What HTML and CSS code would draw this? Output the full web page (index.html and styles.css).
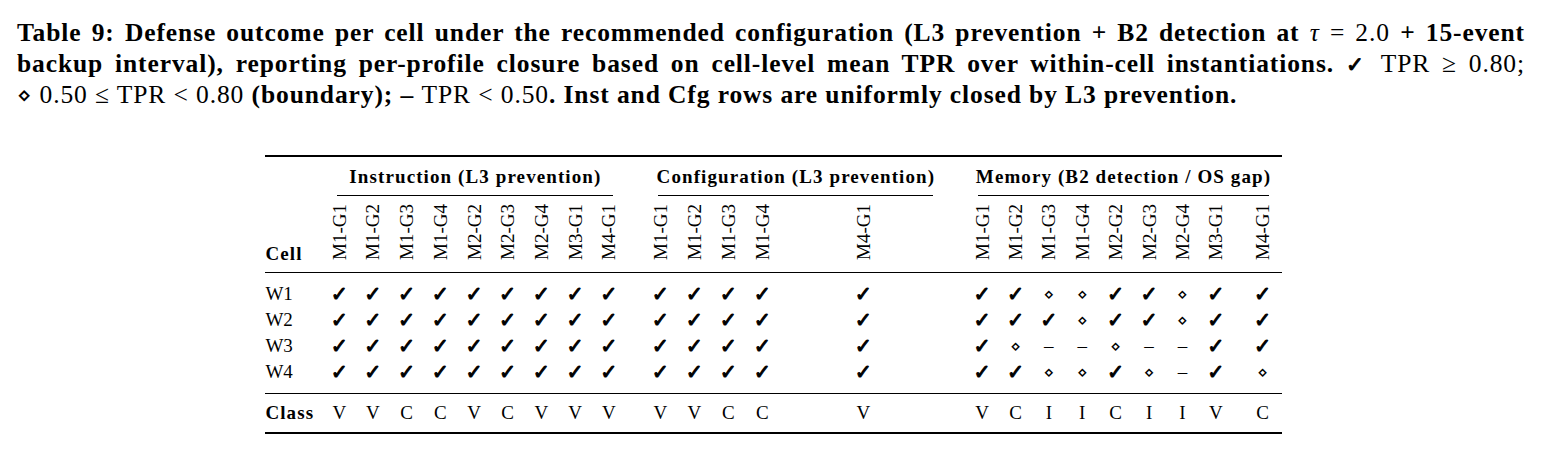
FILE: index.html
```html
<!DOCTYPE html>
<html lang="en">
<head>
<meta charset="utf-8">
<title>Table 9</title>
<link rel="stylesheet" href="styles.css">
</head>
<body>
<figure class="figure">
  <figcaption class="caption">
    <span class="line just">Table 9: Defense outcome per cell under the recommended configuration (L3 prevention + B2 detection at <span class="m"><i>τ</i> = 2.0</span> + 15-event</span>
    <span class="line just">backup interval), reporting per-profile closure based on cell-level mean TPR over within-cell instantiations. <span class="m"><span class="ck">✓</span> TPR ≥ 0.80;</span></span>
    <span class="line"><span class="m"><span class="dm">⋄</span> 0.50 ≤ TPR &lt; 0.80</span> (boundary); – <span class="m">TPR &lt; 0.50</span>. Inst and Cfg rows are uniformly closed by L3 prevention.</span>
  </figcaption>

  <table class="res">
    <colgroup>
      <col class="w-cell">
      <col class="w-i"><col class="w-i"><col class="w-i"><col class="w-i"><col class="w-i"><col class="w-i"><col class="w-i"><col class="w-i"><col class="w-i">
      <col class="w-c1"><col class="w-c"><col class="w-c"><col class="w-c"><col class="w-c5">
      <col class="w-m1"><col class="w-m"><col class="w-m"><col class="w-m"><col class="w-m"><col class="w-m"><col class="w-m"><col class="w-m"><col class="w-m9">
    </colgroup>
    <thead>
      <tr class="grp">
        <th></th>
        <th colspan="9"><div class="cmid cmid-i"><span>Instruction (L3 prevention)</span></div></th>
        <th colspan="5"><div class="cmid cmid-c"><span>Configuration (L3 prevention)</span></div></th>
        <th colspan="9"><div class="cmid cmid-m"><span>Memory (B2 detection / OS gap)</span></div></th>
      </tr>
      <tr class="heads">
        <th class="cellh">Cell</th>
        <th class="rot"><span>M1-G1</span></th><th class="rot"><span>M1-G2</span></th><th class="rot"><span>M1-G3</span></th><th class="rot"><span>M1-G4</span></th><th class="rot"><span>M2-G2</span></th><th class="rot"><span>M2-G3</span></th><th class="rot"><span>M2-G4</span></th><th class="rot"><span>M3-G1</span></th><th class="rot"><span>M4-G1</span></th>
        <th class="rot"><span>M1-G1</span></th><th class="rot"><span>M1-G2</span></th><th class="rot"><span>M1-G3</span></th><th class="rot"><span>M1-G4</span></th><th class="rot"><span>M4-G1</span></th>
        <th class="rot"><span>M1-G1</span></th><th class="rot"><span>M1-G2</span></th><th class="rot"><span>M1-G3</span></th><th class="rot"><span>M1-G4</span></th><th class="rot"><span>M2-G2</span></th><th class="rot"><span>M2-G3</span></th><th class="rot"><span>M2-G4</span></th><th class="rot"><span>M3-G1</span></th><th class="rot"><span>M4-G1</span></th>
      </tr>
    </thead>
    <tbody>
      <tr class="first">
        <th>W1</th>
        <td class="y">✓</td><td class="y">✓</td><td class="y">✓</td><td class="y">✓</td><td class="y">✓</td><td class="y">✓</td><td class="y">✓</td><td class="y">✓</td><td class="y">✓</td>
        <td class="y">✓</td><td class="y">✓</td><td class="y">✓</td><td class="y">✓</td><td class="y">✓</td>
        <td class="y">✓</td><td class="y">✓</td><td class="b">⋄</td><td class="b">⋄</td><td class="y">✓</td><td class="y">✓</td><td class="b">⋄</td><td class="y">✓</td><td class="y">✓</td>
      </tr>
      <tr>
        <th>W2</th>
        <td class="y">✓</td><td class="y">✓</td><td class="y">✓</td><td class="y">✓</td><td class="y">✓</td><td class="y">✓</td><td class="y">✓</td><td class="y">✓</td><td class="y">✓</td>
        <td class="y">✓</td><td class="y">✓</td><td class="y">✓</td><td class="y">✓</td><td class="y">✓</td>
        <td class="y">✓</td><td class="y">✓</td><td class="y">✓</td><td class="b">⋄</td><td class="y">✓</td><td class="y">✓</td><td class="b">⋄</td><td class="y">✓</td><td class="y">✓</td>
      </tr>
      <tr>
        <th>W3</th>
        <td class="y">✓</td><td class="y">✓</td><td class="y">✓</td><td class="y">✓</td><td class="y">✓</td><td class="y">✓</td><td class="y">✓</td><td class="y">✓</td><td class="y">✓</td>
        <td class="y">✓</td><td class="y">✓</td><td class="y">✓</td><td class="y">✓</td><td class="y">✓</td>
        <td class="y">✓</td><td class="b">⋄</td><td class="n">–</td><td class="n">–</td><td class="b">⋄</td><td class="n">–</td><td class="n">–</td><td class="y">✓</td><td class="y">✓</td>
      </tr>
      <tr class="last">
        <th>W4</th>
        <td class="y">✓</td><td class="y">✓</td><td class="y">✓</td><td class="y">✓</td><td class="y">✓</td><td class="y">✓</td><td class="y">✓</td><td class="y">✓</td><td class="y">✓</td>
        <td class="y">✓</td><td class="y">✓</td><td class="y">✓</td><td class="y">✓</td><td class="y">✓</td>
        <td class="y">✓</td><td class="y">✓</td><td class="b">⋄</td><td class="b">⋄</td><td class="y">✓</td><td class="b">⋄</td><td class="n">–</td><td class="y">✓</td><td class="b">⋄</td>
      </tr>
    </tbody>
    <tfoot>
      <tr class="cls">
        <th>Class</th>
        <td>V</td><td>V</td><td>C</td><td>C</td><td>V</td><td>C</td><td>V</td><td>V</td><td>V</td>
        <td>V</td><td>V</td><td>C</td><td>C</td><td>V</td>
        <td>V</td><td>C</td><td>I</td><td>I</td><td>C</td><td>I</td><td>I</td><td>V</td><td>C</td>
      </tr>
    </tfoot>
  </table>
</figure>
</body>
</html>
```

FILE: styles.css
```css
html, body {
  margin: 0;
  padding: 0;
  background: #ffffff;
}

body {
  margin: 8px;
  color: #000000;
  font-family: "Liberation Serif", "Times New Roman", serif;
}

.figure {
  margin: 0;
  padding: 0;
}

/* ---------- caption ---------- */
.caption {
  margin: 10.3px 14px 0 9px;
  font-size: 25.5px;
  line-height: 30.5px;
  font-weight: 700;
  letter-spacing: 0.9px;
}

.caption .line {
  display: block;
  text-align: left;
}

.caption .line.just {
  text-align: justify;
  text-align-last: justify;
}

.caption .m {
  font-weight: 400;
}

.ck {
  font-family: "DejaVu Sans", sans-serif;
  font-weight: 400;
  font-size: 0.84em;
  -webkit-text-stroke: 1px #000;
}

.dm {
  font-family: "DejaVu Sans", sans-serif;
  font-weight: 400;
  font-size: 0.9em;
}

/* ---------- table ---------- */
.res {
  margin: 44px auto 0;
  border-collapse: separate;
  border-spacing: 0;
  table-layout: fixed;
  width: 1016px;
  font-size: 19px;
}

.w-cell { width: 57px; }
.w-i    { width: 33.7px; }
.w-c1   { width: 51.7px; }
.w-c    { width: 34px; }
.w-c5   { width: 168px; }
.w-m1   { width: 51.4px; }
.w-m    { width: 33.4px; }
.w-m9   { width: 49px; }

.res th,
.res td {
  padding: 0;
  text-align: center;
  font-weight: 400;
  line-height: 26px;
  height: 26px;
}

/* column offsets inside the first cell of each group */
.res tr > :nth-child(11) { padding-left: 17.7px; }
.res tr > :nth-child(16) { padding-left: 18px; }
.res tr > :nth-child(24) { padding-left: 11px; }
.res tr.grp > th { padding-left: 0; }

/* group header row (top rule + cmidrules) */
.res tr.grp > th {
  border-top: 2px solid #000;
  padding-top: 10.4px;
  height: auto;
  line-height: 19px;
  font-weight: 700;
  vertical-align: bottom;
}

.cmid {
  display: flex;
  justify-content: center;
  white-space: nowrap;
  border-bottom: 1px solid #000;
  padding-bottom: 8.6px;
  letter-spacing: 1.1px;
}

.cmid-i { margin: 0 12.3px 0 15px; }
.cmid-c { margin: 0 14px 0 32.7px; }
.cmid-m { margin: 0 13px 0 31px; }

/* rotated column headings */
.res tr.heads > th {
  border-bottom: 1px solid #000;
  vertical-align: bottom;
  height: auto;
}

.res th.cellh {
  text-align: left;
  font-weight: 700;
  line-height: 19px;
  padding-bottom: 9px;
  letter-spacing: 1.1px;
}

.res th.rot {
  padding-top: 8px;
  padding-bottom: 12px;
  line-height: 0;
}

.res th.rot span {
  display: inline-block;
  vertical-align: bottom;
  writing-mode: vertical-rl;
  transform: rotate(180deg);
  line-height: 19px;
  white-space: nowrap;
}

/* body rows */
.res tbody th,
.res tfoot th {
  text-align: left;
}

.res tbody tr.first > * { padding-top: 8.3px; }
.res tbody tr.last > *  { padding-bottom: 7.7px; }

.res td.y {
  font-family: "DejaVu Sans", sans-serif;
  font-size: 20.5px;
  -webkit-text-stroke: 1px #000;
}

.res td.b {
  font-family: "DejaVu Sans", sans-serif;
  font-size: 17px;
}

.res td.n {
  font-size: 19px;
}

/* class row */
.res tr.cls > * {
  border-top: 1px solid #000;
  border-bottom: 2px solid #000;
  padding-top: 6.6px;
  padding-bottom: 5.4px;
}

.res tr.cls > th {
  font-weight: 700;
  letter-spacing: 1.1px;
}
```
